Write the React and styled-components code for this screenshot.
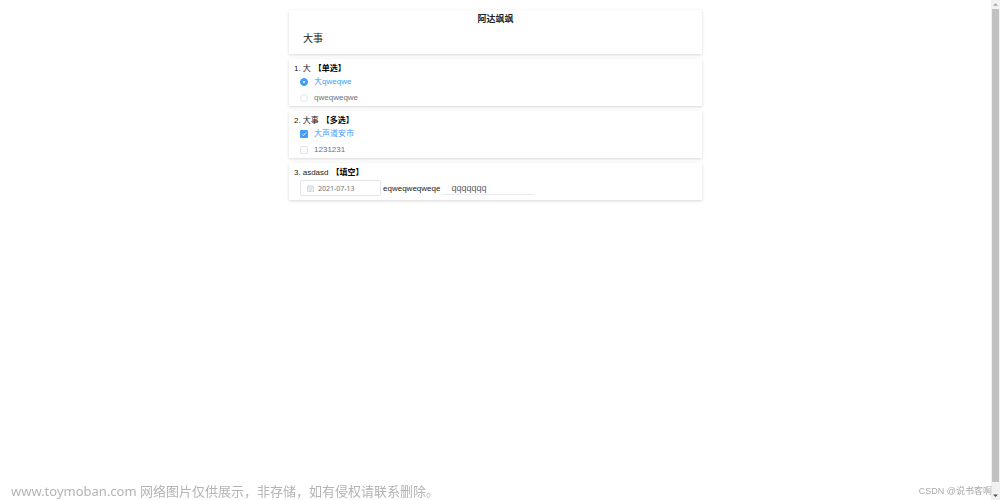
import { useState } from "react"
import styled, { createGlobalStyle } from "styled-components"

const GlobalStyle = createGlobalStyle`
        * {
            box-sizing: border-box;
        }

        body {
            background: #fff;
            color: #222;
            font-family: "Liberation Sans", "Noto Sans CJK SC", sans-serif;
            font-size: 8px;
            margin: 0;
        }
    `;

//styles
const Wrapper = styled.div`
        display: grid;
        grid-template-columns: 1fr 9px;
        min-height: 100vh;
    `;

const Survey = styled.form`
        display: flex;
        flex-direction: column;
        gap: 5px;
        justify-self: center;
        padding: 10px 0;
        width: 41.67%;
    `;

const Card = styled.section`
        background: #fff;
        box-shadow: 0 1px 3px rgba(0, 0, 0, .16);
        padding: 5px 5px 0;
    `;

const HeaderCard = styled(Card)`
        padding: 3px 14px 8px;
    `;

const Title = styled.h1`
        font-size: 9px;
        line-height: 12px;
        margin: 0;
        text-align: center;
    `;

const Intro = styled.p`
        font-size: 10px;
        line-height: 14px;
        margin: 7px 0 0;
    `;

const Question = styled.h2`
        display: flex;
        font-size: 8px;
        font-weight: 400;
        gap: 2px;
        line-height: 10px;
        margin: 0;
    `;

const Kind = styled.strong`
        color: #000;
        margin-left: 1px;
    `;

const Option = styled.label`
        align-items: center;
        color: ${props => props.$checked ? "#409eff" : "#707276"};
        cursor: pointer;
        display: flex;
        gap: 6px;
        height: 16px;
        line-height: 8px;
        padding-left: 6px;
    `;

const Choice = styled.input`
        appearance: none;
        background: #fff;
        border: 1px solid #e2e5eb;
        border-radius: ${props => props.type === "radio" ? "50%" : "1px"};
        display: grid;
        height: 8px;
        margin: 0;
        place-items: center;
        width: 8px;

        &:checked {
            background: #409eff;
            border-color: #409eff;
        }

        &[type="radio"]:checked::before {
            background: #fff;
            border-radius: 50%;
            content: "";
            height: 2px;
            width: 2px;
        }
    `;

const CheckHolder = styled.span`
        display: grid;

        & > * {
            grid-area: 1 / 1;
        }

        & > svg {
            pointer-events: none;
        }
    `;

const Blanks = styled.div`
        align-items: center;
        display: flex;
        padding: 2px 0 4px 6px;
    `;

const DateBox = styled.label`
        align-items: center;
        border: 1px solid #e2e5eb;
        border-radius: 2px;
        display: flex;
        gap: 4px;
        height: 16px;
        margin-right: 2px;
        padding-left: 6px;
        width: 81px;

        & > svg {
            flex-shrink: 0;
        }
    `;

const DateInput = styled.input`
        background: none;
        border: 0;
        color: #707276;
        font: 7px "Noto Sans", sans-serif;
        min-width: 0;
        outline: none;
        padding: 0;
        width: 100%;
    `;

const BlankInput = styled.input`
        background: none;
        border: 0;
        border-bottom: 1px solid #e8eaef;
        color: #606266;
        font: 9px "Liberation Sans", sans-serif;
        height: 14px;
        margin-left: 3px;
        outline: none;
        padding: 0 8px;
        width: 90px;
    `;

const ScrollTrack = styled.div`
        background: #f1f1f1;
        display: flex;
        flex-direction: column;
        height: 100vh;
        padding: 0 1px;
        position: sticky;
        top: 0;
    `;

const ScrollThumb = styled.div`
        background: #c1c1c1;
        flex: 1;
        margin-bottom: 9px;
    `;

const Watermark = styled.div`
        bottom: 0;
        color: #b4b4b4;
        font: 13px/18px "Noto Sans", "Noto Sans CJK SC", sans-serif;
        left: 11px;
        position: fixed;
    `;

const Credit = styled(Watermark)`
        color: #aaa;
        font: 9px/18px "Liberation Sans", "Noto Sans CJK SC", sans-serif;
        left: auto;
        right: 8px;
    `;

const ScrollArrow = ({ down }) => (
    <svg width="7" height="9" viewBox="0 0 7 9">
        <path d={down ? "M1 3.5h5L3.5 6z" : "M1 5.8h5L3.5 3.3z"} fill={down ? "#505050" : "#a3a3a3"} />
    </svg>
)

const CalendarIcon = () => (
    <svg width="7" height="7" viewBox="0 0 7 7" fill="none" stroke="#c8ccd3" strokeWidth=".7">
        <path d="M.5 1.2h6v5.3h-6zM.5 2.8h6M2 .2v1.6M5 .2v1.6M1.5 4h4M1.5 5.2h4" />
    </svg>
)

const radioOptions = ["大qweqwe", "qweqweqwe"];
const checkOptions = ["大声道安市", "1231231"];

export default function App() {
    const [single, setSingle] = useState(radioOptions[0]);
    const [multiple, setMultiple] = useState([checkOptions[0]]);
    const [date, setDate] = useState("2021-07-13");
    const [blank, setBlank] = useState("qqqqqqq");

    const toggle = (option) => {
        setMultiple(multiple.includes(option)
            ? multiple.filter(item => item !== option)
            : [...multiple, option]);
    }

    return (
        <Wrapper lang="zh-CN">
            <GlobalStyle />

            <Survey>
                <HeaderCard>
                    <Title>阿达飒飒</Title>
                    <Intro>大事</Intro>
                </HeaderCard>

                <Card>
                    <Question><span>1.</span><span>大</span><Kind>【单选】</Kind></Question>
                    {radioOptions.map(option => (
                        <Option key={option} $checked={single === option}>
                            <Choice type="radio" name="single"
                                checked={single === option}
                                onChange={() => setSingle(option)}
                            />
                            {option}
                        </Option>
                    ))}
                </Card>

                <Card>
                    <Question><span>2.</span><span>大事</span><Kind>【多选】</Kind></Question>
                    {checkOptions.map(option => (
                        <Option key={option} $checked={multiple.includes(option)}>
                            <CheckHolder>
                                <Choice type="checkbox"
                                    checked={multiple.includes(option)}
                                    onChange={() => toggle(option)}
                                />
                                {multiple.includes(option) && (
                                    <svg width="8" height="8" viewBox="0 0 8 8" fill="none" stroke="#fff" strokeWidth=".8">
                                        <path d="M2 4.2l1.4 1.4L6.1 2.5" />
                                    </svg>
                                )}
                            </CheckHolder>
                            {option}
                        </Option>
                    ))}
                </Card>

                <Card>
                    <Question><span>3.</span><span>asdasd</span><Kind>【填空】</Kind></Question>
                    <Blanks>
                        <DateBox>
                            <CalendarIcon />
                            <DateInput aria-label="日期" value={date}
                                onChange={e => setDate(e.target.value)}
                            />
                        </DateBox>
                        <label htmlFor="blank">eqweqweqweqe</label>
                        <BlankInput id="blank" value={blank}
                            onChange={e => setBlank(e.target.value)}
                        />
                    </Blanks>
                </Card>
            </Survey>

            <ScrollTrack aria-hidden="true">
                <ScrollArrow />
                <ScrollThumb />
                <ScrollArrow down />
            </ScrollTrack>

            <Watermark>www.toymoban.com 网络图片仅供展示，非存储，如有侵权请联系删除。</Watermark>
            <Credit>CSDN @说书客啊</Credit>
        </Wrapper>
    )
}
